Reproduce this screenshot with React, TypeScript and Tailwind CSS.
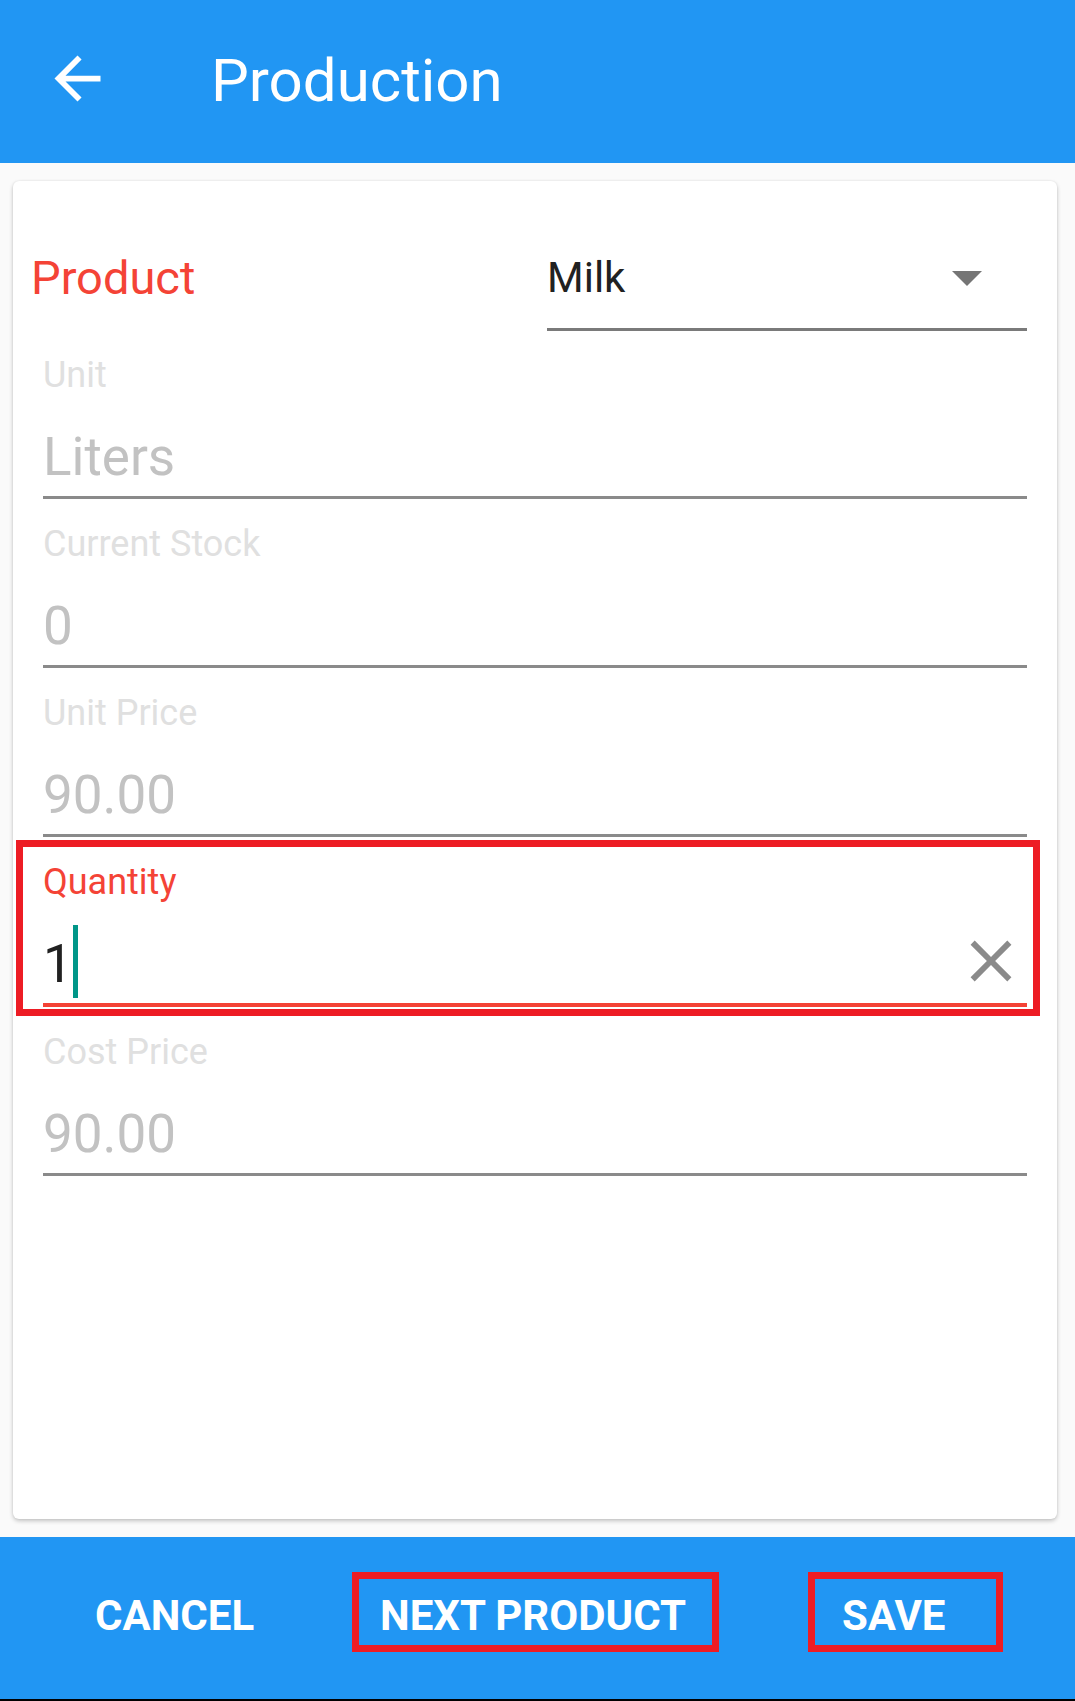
import React from "react";

function Field({ label, value }: { label: string; value: string }) {
  return (
    <div className="flex flex-col pt-[27px] mx-[30px]">
      <div className="text-[36px] leading-none text-[#e0e0e0] h-[36px]">{label}</div>
      <div className="mt-[38px] h-[53px] text-[53px] leading-none text-[#c2c2c2]">{value}</div>
      <div className="mt-[12px] h-[3px] bg-[#8a8a8a]" />
    </div>
  );
}

export default function App() {
  return (
    <div className="w-[1075px] h-[1701px] flex flex-col bg-[#fafafa] font-['Roboto','Liberation_Sans',sans-serif] overflow-hidden">
      {/* Header */}
      <div className="h-[163px] shrink-0 bg-[#2196f3] flex items-start">
        <svg className="ml-[43px] mt-[44px] shrink-0" width="69" height="69" viewBox="0 0 24 24" fill="#ffffff">
          <path d="M20 11H7.83l5.59-5.59L12 4l-8 8 8 8 1.41-1.41L7.83 13H20v-2z" />
        </svg>
        <div className="ml-[99px] mt-[51px] text-[60px] leading-none text-white">Production</div>
      </div>

      {/* Card */}
      <div className="relative ml-[13px] mr-[18px] mt-[18px] h-[1338px] shrink-0 bg-white rounded-[6px] shadow-[0_2px_4px_rgba(0,0,0,0.22),0_0_2px_rgba(0,0,0,0.08)] flex flex-col">
        {/* Product row */}
        <div className="h-[149px] flex items-start">
          <div className="ml-[18px] mt-[73px] text-[47px] leading-none text-[#f44336]">Product</div>
          <div className="ml-auto mr-[30px] mt-[76px] w-[480px] flex flex-col">
            <div className="h-[42px] flex items-start justify-between">
              <span className="text-[42px] leading-none text-[#212121]">Milk</span>
              <svg className="-mt-[16px] mr-[24px] shrink-0" width="72" height="72" viewBox="0 0 24 24" fill="#757575">
                <path d="M7 10l5 5 5-5z" />
              </svg>
            </div>
            <div className="mt-[29px] h-[3px] bg-[#7a7a7a]" />
          </div>
        </div>

        <Field label="Unit" value="Liters" />
        <Field label="Current Stock" value="0" />
        <Field label="Unit Price" value="90.00" />

        {/* Quantity (focused) */}
        <div className="flex flex-col pt-[27px] mx-[30px]">
          <div className="text-[36px] leading-none text-[#f44336] h-[36px]">Quantity</div>
          <div className="mt-[38px] h-[53px] flex items-start">
            <span className="text-[53px] leading-none text-[#212121]">1</span>
            <div className="-mt-[13px] h-[73px] w-[5px] bg-[#009688] shrink-0" />
            <svg className="ml-auto -mt-[12px] mr-[1px] shrink-0" width="70" height="70" viewBox="0 0 24 24" fill="#8a8a8a">
              <path d="M19 6.41L17.59 5 12 10.59 6.41 5 5 6.41 10.59 12 5 17.59 6.41 19 12 13.41 17.59 19 19 17.59 13.41 12z" />
            </svg>
          </div>
          <div className="mt-[12px] h-[4px] bg-[#f44336]" />
        </div>

        <Field label="Cost Price" value="90.00" />

        {/* annotation box */}
        <div className="absolute left-[3px] top-[659px] w-[1024px] h-[176px] border-[7px] border-[#ed1c24] pointer-events-none" />
      </div>

      <div className="flex-1" />

      {/* Bottom bar */}
      <div className="h-[162px] shrink-0 bg-[#2196f3] flex items-start pt-[35px]">
        <div className="ml-[95px] w-[257px] h-[80px] flex items-center pt-[8px] text-[42px] font-bold leading-none text-white">
          CANCEL
        </div>
        <div className="w-[367px] h-[80px] border-[7px] border-[#ed1c24] flex items-center pt-[8px] pl-[21px] text-[42px] font-bold leading-none text-white whitespace-nowrap">
          NEXT PRODUCT
        </div>
        <div className="ml-[89px] w-[195px] h-[80px] border-[7px] border-[#ed1c24] flex items-center pt-[8px] pl-[27px] text-[42px] font-bold leading-none text-white">
          SAVE
        </div>
      </div>
      <div className="h-[2px] shrink-0 bg-black" />
    </div>
  );
}
